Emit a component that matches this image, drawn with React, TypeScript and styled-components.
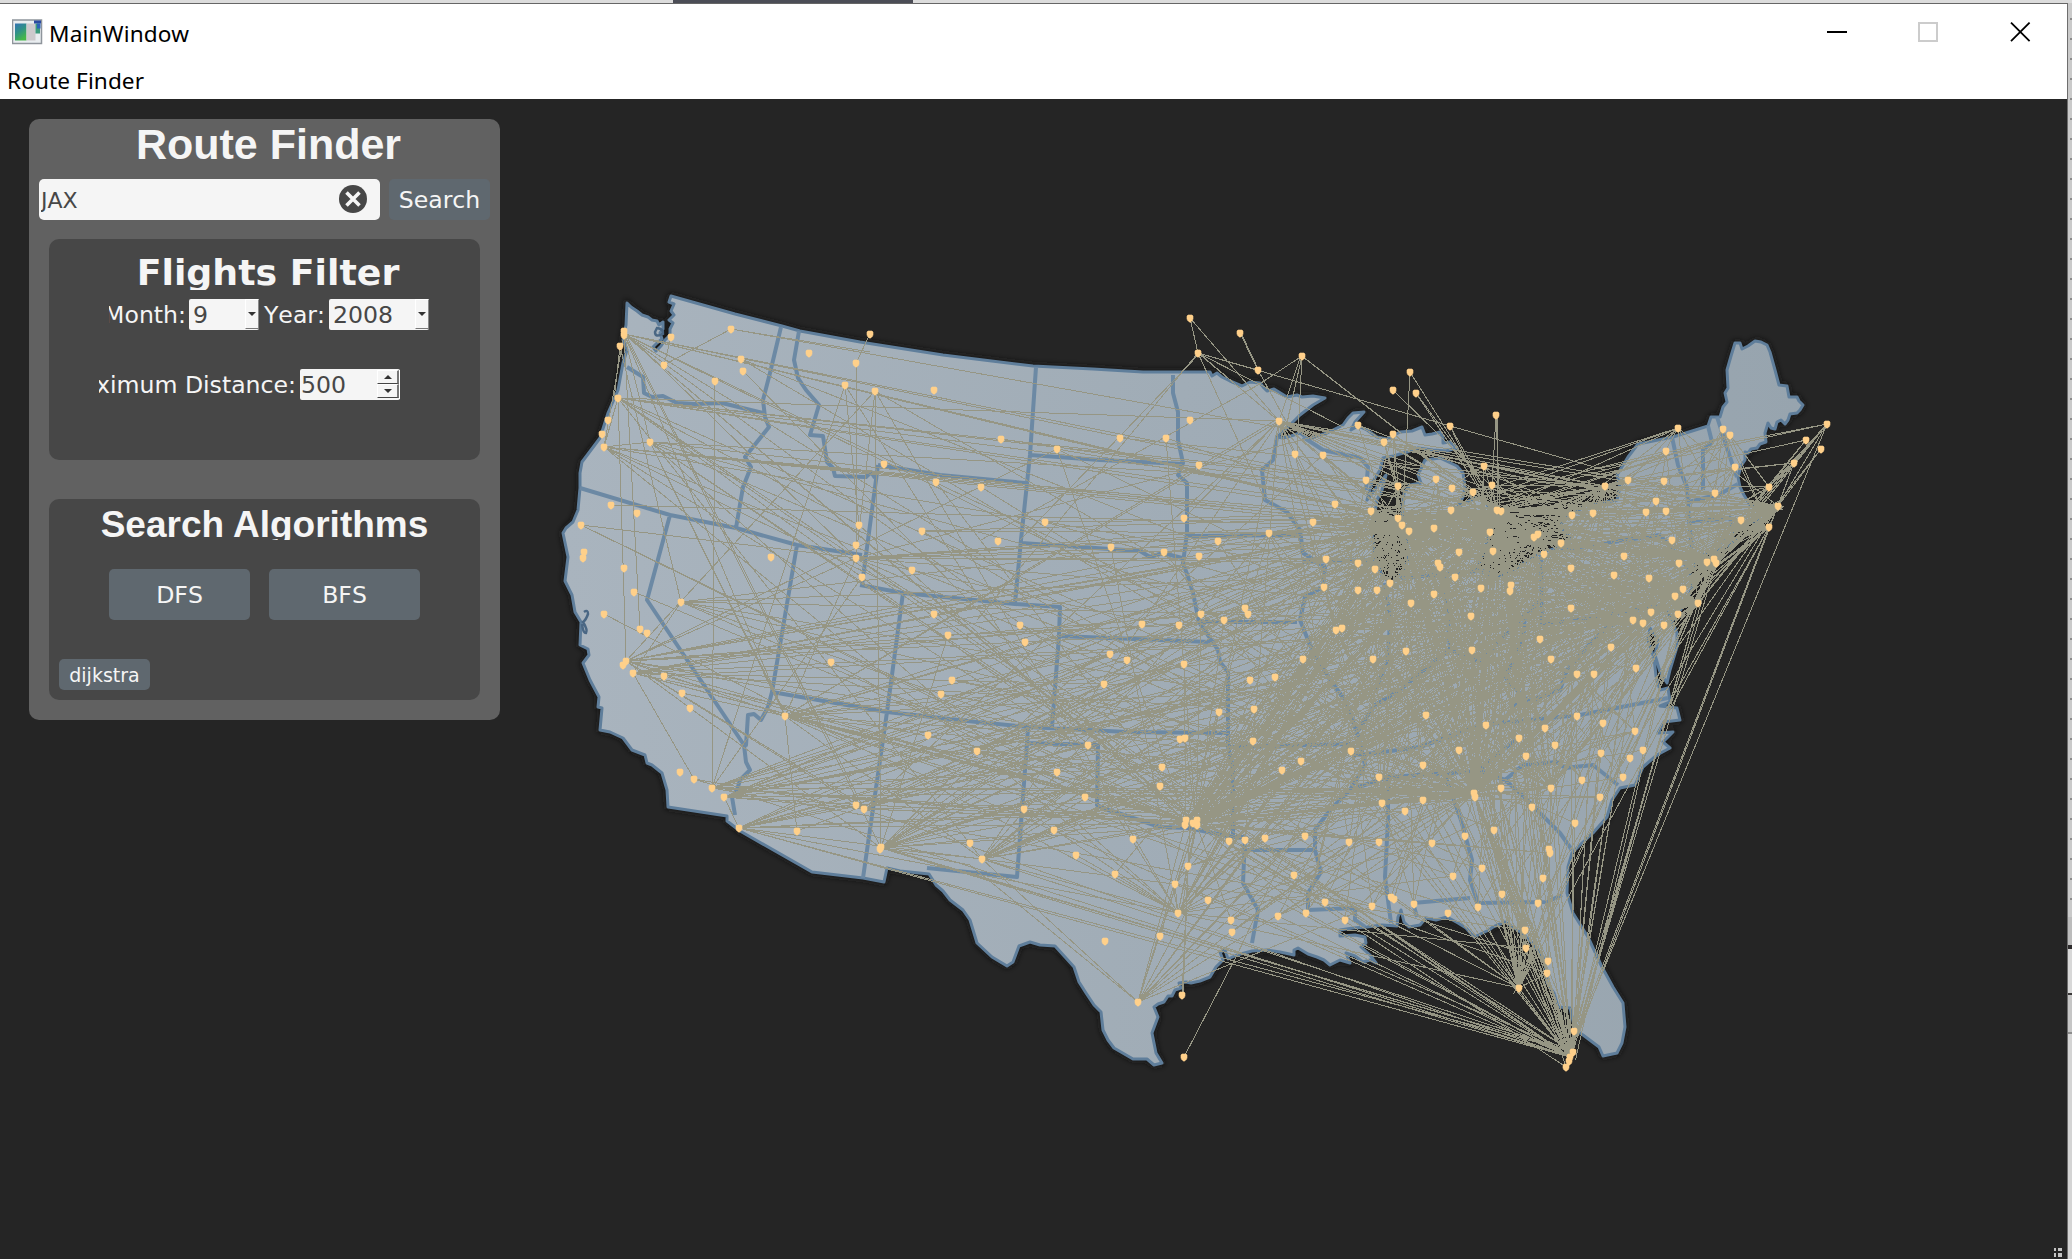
import React from "react";
import styled, { createGlobalStyle } from "styled-components";

const GlobalStyle = createGlobalStyle`
  html, body { margin: 0; padding: 0; background: #d0d0d0; overflow: hidden; }
  * { box-sizing: border-box; }
  button, input { font: inherit; border: 0; margin: 0; padding: 0; }
`;

const uiFont = `"DejaVu Sans", Verdana, sans-serif`;
const headFont = `"Liberation Sans", Arial, sans-serif`;
const winFont = `"Noto Sans", "Open Sans", sans-serif`;

/* ---------- window chrome ---------- */

const Screen = styled.div`
  width: 2072px;
  height: 1259px;
  display: flex;
  flex-direction: column;
  background: #d0d0d0;
`;
const TopStrip = styled.div`
  height: 3px;
  flex: none;
  padding-left: 673px;
  background: #dcdcdc;
`;
const TopStripTab = styled.div`
  width: 240px;
  height: 3px;
  background: #4b4d56;
`;
const Row = styled.div`
  flex: 1;
  display: flex;
  min-height: 0;
`;
const Window = styled.main`
  width: 2068px;
  display: flex;
  flex-direction: column;
  border-top: 1px solid #666;
  border-right: 1px solid #6e6e6e;
  background: #252525;
`;
const EdgeStrip = styled.div`
  width: 4px;
  display: flex;
  flex-direction: column;
`;
const EdgeTicks = styled.div`
  height: 914px;
  background: repeating-linear-gradient(to bottom, transparent 0 15px, #8a8a8a 15px 17px, transparent 17px 20px) 2px 0 / 2px 100% no-repeat, #cacaca;
`;
const EdgePart = styled.div<{ $h: number; $c: string }>`
  height: ${(p) => p.$h}px;
  background: ${(p) => p.$c};
`;
const TitleBar = styled.header`
  height: 56px;
  flex: none;
  display: flex;
  align-items: flex-start;
  background: #fff;
  padding: 15px 36px 0 12px;
`;
const WinTitle = styled.span`
  font: 22.6px/30px ${winFont};
  letter-spacing: 0.15px;
  color: #000;
  margin-left: 6px;
`;
const Controls = styled.div`
  margin-left: auto;
  display: flex;
  gap: 71px;
  padding-top: 3px;
`;
const MenuBar = styled.nav`
  height: 39px;
  flex: none;
  background: #fff;
  padding: 6px 7px 0;
`;
const MenuItem = styled.span`
  display: block;
  font: 22.6px/30px ${winFont};
  letter-spacing: 0.1px;
  color: #000;
`;
const Body = styled.div`
  flex: 1;
  display: flex;
  align-items: flex-start;
  padding: 20px 5px 0 29px;
  background: #252525;
`;
const MapArea = styled.div`
  flex: 1;
  align-self: stretch;
  display: flex;
  flex-direction: column;
  padding: 161px 0 2px 40px;
`;
const Grip = styled.svg`
  margin: auto 0 0 auto;
  display: block;
`;

/* ---------- side panel ---------- */

const Panel = styled.aside`
  width: 471px;
  height: 601px;
  flex: none;
  padding: 0 10px 20px;
  border-radius: 10px;
  background: #616161;
  font-family: ${uiFont};
  font-kerning: none;
  color: #f5f5f5;
`;
const PanelTitle = styled.h1`
  margin: 0;
  padding-left: 8px;
  height: 60px;
  font: bold 43px/51px ${headFont};
  text-align: center;
`;
const SearchRow = styled.form`
  display: flex;
  gap: 9px;
  margin-bottom: 19px;
`;
const Field = styled.label`
  width: 341px;
  height: 41px;
  display: flex;
  align-items: center;
  padding: 0 13px 1px 2px;
  border-radius: 5px;
  background: #f5f5f5;
`;
const FieldInput = styled.input`
  flex: 1;
  min-width: 0;
  height: 40px;
  padding-top: 2px;
  background: transparent;
  outline: none;
  font-size: 22px;
  color: #474747;
`;
const Btn = styled.button<{ $w: number; $h: number; $size?: number }>`
  width: ${(p) => p.$w}px;
  height: ${(p) => p.$h}px;
  border-radius: 5px;
  background: #5f686f;
  color: #f5f5f5;
  font-family: ${uiFont};
  font-size: ${(p) => p.$size ?? 23.6}px;
  font-kerning: none;
  white-space: nowrap;
`;
const Card = styled.section<{ $h: number }>`
  height: ${(p) => p.$h}px;
  margin: 0 10px;
  border-radius: 10px;
  background: #474747;
  overflow: hidden;
`;
const FilterTitle = styled.h2`
  margin: 11px 0 9px;
  padding-left: 7px;
  height: 40px;
  overflow: hidden;
  font: bold 36.3px/46px ${uiFont};
  text-align: center;
`;
const AlgoTitle = styled.h2`
  margin: 10px 0 29px;
  height: 31px;
  overflow: hidden;
  font: bold 37px/32px ${headFont};
  text-align: center;
`;
const FilterRow = styled.div<{ $left: number; $bottom?: number }>`
  display: flex;
  height: 31px;
  margin-bottom: ${(p) => p.$bottom ?? 0}px;
  padding-left: ${(p) => p.$left}px;
`;
const Label = styled.div<{ $w: number; $end: number }>`
  width: ${(p) => p.$w}px;
  padding-right: ${(p) => p.$end}px;
  display: flex;
  justify-content: flex-end;
  overflow: hidden;
  white-space: nowrap;
  font-size: 23.6px;
  line-height: 33px;
`;
const Box = styled.div<{ $w: number; $pad: number }>`
  width: ${(p) => p.$w}px;
  height: 31px;
  display: flex;
  justify-content: space-between;
  padding-left: ${(p) => p.$pad}px;
  border-radius: 2px;
  background: #f5f5f5;
  color: #474747;
  font-size: 23.6px;
  line-height: 33px;
`;
const DropButton = styled.span`
  width: 14px;
  height: 30px;
  display: grid;
  place-items: center;
  border: 1px solid #fff;
  border-right: 1px solid #8a8a8a;
  border-bottom: 1px solid #777;
  background: #f5f5f5;
`;
const Arrow = styled.i<{ $up?: boolean }>`
  width: 0;
  height: 0;
  border: 4px solid transparent;
  border-${(p) => (p.$up ? "bottom" : "top")}-color: #333;
  border-${(p) => (p.$up ? "top" : "bottom")}-width: 0;
`;
const Spin = styled.span`
  width: 23px;
  height: 29px;
  margin: 1px 0 0;
  display: grid;
  grid-template-rows: 14px 14px;
  border-right: 1px solid #fff;
`;
const SpinHalf = styled.span`
  display: grid;
  place-items: center;
  border: 1px solid #fff;
  border-right: 2px solid #777;
  border-bottom: 1px solid #444;
`;
const ButtonRow = styled.div`
  display: flex;
  gap: 19px;
  padding-left: 60px;
  margin-bottom: 39px;
`;
const SmallRow = styled.div`
  padding-left: 10px;
`;
const Spacer = styled.div`
  height: 39px;
`;

/* ---------- map data ---------- */

type P = [number, number];

const parse = (s: string): P[] =>
  s.trim().split(/\s+/).map((t) => t.split(",").map(Number) as P);

const LAND =
  "M627,303 L631,307 637,311 642,315 648,317 652,320 657,321 659,325 663,322 663,329 660,333 662,339 657,343 653,347 656,351 661,346 665,340 670,335 670,329 673,323 669,320 674,315 671,311 674,304 669,302 671,296 735,314 782,326 800,331 860,342 943,355 1033,366 1093,369 1143,372 1210,372 1212,376 1217,373 1222,377 1230,381 1242,386 1250,382 1260,383 1264,388 1267,391 1274,389 1287,397 1297,395 1302,397 1313,396 1325,398 1313,405 1300,415 1288,427 1277,437 1283,438 1291,436 1300,433 1308,439 1327,433 1343,425 1348,418 1353,413 1364,412 1355,422 1351,430 1358,426 1367,430 1377,437 1387,439 1400,432 1412,431 1422,427 1425,435 1432,434 1440,432 1443,438 1443,443 1450,442 1457,448 1446,451 1433,450 1418,448 1407,452 1393,456 1383,458 1380,470 1372,483 1367,500 1377,487 1386,475 1382,490 1377,500 1375,513 1372,533 1375,557 1383,578 1392,582 1402,573 1408,560 1407,540 1402,513 1404,493 1410,485 1421,483 1418,475 1425,460 1440,458 1457,466 1463,473 1465,487 1463,497 1458,507 1470,500 1483,497 1492,513 1488,540 1477,570 1497,577 1513,570 1540,553 1560,547 1570,538 1560,526 1567,517 1587,505 1617,500 1620,487 1617,475 1628,457 1638,444 1673,437 1708,426 1711,417 1720,417 1723,407 1727,402 1725,393 1728,388 1727,370 1731,356 1735,343 1740,343 1742,349 1748,346 1755,341 1761,342 1767,345 1770,352 1775,370 1779,385 1787,386 1789,397 1797,397 1799,401 1803,405 1800,410 1797,413 1790,414 1788,420 1785,424 1781,420 1777,422 1775,429 1771,428 1768,423 1765,433 1766,442 1760,444 1757,448 1751,449 1748,453 1745,452 1745,460 1741,466 1738,477 1740,487 1744,495 1750,505 1765,512 1770,508 1764,520 1748,522 1733,530 1733,538 1722,542 1738,540 1720,550 1700,556 1690,573 1692,588 1687,600 1678,614 1673,620 1668,612 1677,633 1677,647 1670,670 1667,683 1660,672 1655,655 1658,640 1650,628 1648,640 1654,658 1656,676 1660,690 1668,688 1670,702 1660,706 1677,708 1680,720 1664,722 1658,733 1673,732 1663,742 1670,748 1657,755 1643,767 1635,785 1620,788 1612,800 1607,817 1593,833 1582,843 1572,853 1568,867 1567,893 1573,913 1588,937 1602,967 1613,987 1623,1003 1625,1027 1622,1043 1617,1053 1603,1056 1599,1047 1583,1035 1575,1030 1570,1008 1558,1007 1554,993 1547,983 1546,970 1543,957 1532,943 1522,933 1505,922 1493,927 1489,930 1474,937 1466,928 1458,923 1447,917 1436,920 1426,918 1420,925 1409,927 1404,922 1401,910 1398,917 1397,926 1382,925 1367,927 1353,928 1340,930 1340,936 1355,935 1365,937 1366,943 1361,947 1370,955 1376,963 1370,960 1363,962 1355,956 1346,953 1350,963 1340,960 1330,965 1324,960 1317,957 1308,954 1298,948 1294,950 1294,955 1280,952 1267,950 1252,951 1237,955 1228,959 1225,950 1220,952 1223,960 1216,967 1210,977 1200,981 1191,983 1186,982 1179,983 1181,988 1175,990 1172,996 1168,996 1164,1002 1158,1004 1154,1007 1158,1017 1152,1033 1156,1053 1162,1063 1154,1065 1147,1059 1133,1059 1114,1048 1108,1040 1103,1030 1101,1012 1094,1005 1086,993 1079,982 1074,967 1065,957 1055,946 1040,945 1030,942 1019,946 1013,962 1007,966 992,957 977,943 970,920 963,910 950,900 943,891 936,885 929,874 900,871 887,868 884,882 863,878 812,872 740,831 727,821 727,816 668,807 667,790 662,773 652,765 647,763 645,755 632,750 623,738 610,732 600,730 602,708 598,707 599,697 590,680 583,663 589,655 588,649 580,645 581,622 575,612 572,595 565,581 568,557 563,533 566,528 573,522 578,510 580,488 580,473 582,462 600,438 608,413 618,390 623,363 627,350 623,340 626,325Z";

const BORDERS = [
  "627,367 643,377 644,393 652,397 663,396 677,403 695,404 722,403 763,413",
  "781,327 770,373 763,400 765,417 769,427 745,457 751,467 743,487 736,528",
  "580,488 670,515 736,528 797,545 862,555",
  "799,331 794,360 798,378 806,390 819,405 810,435 823,436 827,462 833,468 835,476 866,477 871,472 875,478",
  "878,465 862,585",
  "878,465 940,475 1025,483",
  "1036,367 1030,455 1021,540 1015,603",
  "1030,455 1100,460 1183,464",
  "1021,543 1140,551 1150,557 1163,553 1182,558",
  "1173,375 1173,393 1178,412 1178,440 1183,463 1178,475 1187,483 1187,533 1183,563 1188,577 1193,593 1199,622 1210,638 1218,650 1220,662 1228,672 1228,747 1233,767 1233,837 1245,837 1243,883 1258,910 1252,943",
  "1187,536 1302,535",
  "860,585 903,593 1015,604 1060,607 1059,636 1210,642",
  "1059,636 1052,727",
  "903,593 887,712 863,878",
  "772,692 887,712 977,722 1028,727 1127,732 1228,733",
  "1028,728 1027,743 1098,745 1097,805 1105,809 1118,813 1160,827 1188,828 1233,837",
  "1027,743 1017,877 927,868",
  "670,515 647,600 744,745",
  "797,545 772,692 768,707 761,720 754,714 748,715 746,745 744,745 746,762 750,770 740,780 737,790 732,797 735,815",
  "1243,850 1315,850",
  "1277,437 1273,460 1262,470 1265,500 1287,512 1300,530 1303,553 1325,567 1323,587 1305,597 1300,620 1310,645 1330,680 1345,700 1358,735 1365,765 1350,790 1330,810 1315,830 1315,850 1321,872 1308,893 1308,910 1355,908 1355,920 1365,927",
  "1303,437 1323,450 1360,458 1368,467 1366,490",
  "1199,622 1297,622",
  "1302,562 1375,560",
  "1385,583 1390,620 1388,660 1375,690",
  "1400,578 1490,570",
  "1445,577 1450,650",
  "1355,735 1375,705 1400,690 1430,665 1450,650 1480,662 1500,640 1525,615 1541,600",
  "1541,553 1542,625 1600,616 1665,605",
  "1560,550 1660,535 1690,570",
  "1228,747 1352,744 1354,755 1362,755",
  "1361,755 1420,747 1480,725 1580,715 1668,698",
  "1350,790 1388,777 1480,771 1505,780 1520,793 1560,833 1572,850",
  "1505,780 1523,765 1557,762 1565,768 1593,765 1618,785",
  "1388,777 1388,820 1385,877 1391,923",
  "1445,775 1461,820 1472,860 1470,880 1478,903 1547,902 1562,895",
  "1417,917 1413,903 1470,898",
  "1520,737 1500,752 1480,770",
  "1525,615 1523,640 1505,677 1523,697 1500,723",
  "1523,697 1530,701 1560,690 1567,670 1587,647 1607,627 1625,620",
  "1672,437 1678,465 1687,487 1689,520 1692,548",
  "1708,426 1712,442 1703,450 1703,490",
  "1717,417 1732,463 1737,477",
  "1689,502 1720,494 1738,484",
  "1689,522 1730,518 1733,530",
];

const LAKES = [
  "M584,612 q4,-3 4,2 q-2,6 -5,8 q5,8 3,11 q-3,0 -4,-9",
  "M657,328 q7,1 6,6 q-8,4 -8,-2 z",
];

/* airports scattered over the mainland */
const AIRPORTS = parse(`
624,331 624,335 620,346 671,337 731,329 664,365 741,359 743,371 715,381 809,353 856,363 845,385 618,398 608,420 602,434 604,447 650,442
611,505 637,513 581,525 584,552 583,558 624,568 771,557 859,525 856,545 856,558 862,577 634,592 604,614 640,629 647,633
626,661 623,665 633,673 664,676 682,693 690,708 681,602 831,662 785,716 680,772 694,779 712,788 724,797 739,828 797,831 856,805 864,809
880,849 881,847 912,570 934,614 928,735 875,391 934,390 1001,439 1057,449 1120,438 1166,438 1190,420 1199,465 884,464 936,482 981,487
1045,522 922,531 998,541 1111,547 1164,552 1184,518 1218,541 1199,556 948,635 1020,625 1025,642 952,680 941,694 977,751 1142,624 1179,625
1201,614 1224,620 1245,608 1248,614 1110,654 1127,660 1104,684 1184,664 1250,680 1254,709 1219,712 1253,741 1180,739 1185,738 1088,745
1057,772 1162,767 1160,786 1085,797 1024,809 1054,830 1133,839 970,843 982,859 1076,855 1115,874 1186,820 1185,825 1193,823 1197,820
1197,825 1229,841 1245,840 1188,866 1175,884 1279,421 1358,425 1393,434 1384,442 1295,454 1323,455 1366,480 1398,486 1436,479 1452,488
1473,492 1484,466 1492,485 1335,504 1371,511 1451,510 1497,510 1501,511 1313,522 1269,533 1398,518 1402,525 1409,531 1434,528 1490,532
1493,551 1534,537 1538,534 1326,559 1358,563 1375,569 1459,552 1438,563 1440,567 1455,577 1390,583 1324,587 1358,590 1377,590 1434,594
1481,588 1511,585 1510,591 1678,428 1723,429 1730,435 1666,451 1735,467 1769,487 1778,506 1769,527 1741,520 1605,486 1628,480 1664,481
1715,493 1656,501 1646,512 1666,511 1572,515 1593,513 1561,543 1544,554 1571,568 1624,556 1672,540 1679,563 1614,575 1649,578 1707,562
1714,559 1716,563 1683,589 1675,596 1698,603 1571,608 1651,612 1678,614 1633,620 1643,623 1664,625 1540,639 1551,659 1611,647 1577,674
1594,674 1636,668 1577,716 1603,723 1635,731 1486,725 1519,738 1545,728 1555,745 1526,756 1601,753 1630,758 1643,750 1623,777 1582,780
1501,788 1551,788 1600,797 1532,807 1575,823 1494,830 1549,849 1550,853 1543,878 1538,903 1482,868 1502,894 1525,930 1526,948 1548,961
1547,973 1519,988 1574,1031 1573,1052 1570,1057 1569,1061 1566,1067 1208,900 1178,913 1231,920 1232,932 1265,838 1305,836 1294,875
1349,842 1379,842 1325,902 1278,916 1306,913 1345,920 1372,906 1391,897 1394,899 1414,904 1448,913 1432,843 1465,836 1453,876 1478,907
1105,941 1160,936 1138,1002 1303,659 1275,677 1336,630 1342,628 1373,659 1406,651 1472,650 1411,603 1471,616 1426,715 1351,751 1301,761
1282,770 1379,777 1423,765 1459,750 1474,793 1475,797 1423,800 1405,811 1382,803
`);

/* airports with a handful of explicit connections */
const REMOTE = parse(`
870,334 1190,318 1198,353 1240,333 1258,370 1302,356 1410,372 1393,390 1416,393 1496,415 1450,426 1827,424 1806,440 1821,449 1794,463 1182,995 1184,1057
`);

const FIXED = [
  "870,334 856,363", "856,363 856,558", "845,385 859,525", "1190,318 1198,353", "1190,318 1279,421", "1198,353 1450,426", "1198,353 1279,421",
  "1201,355 1281,423", "1198,353 1343,427", "1198,353 1258,370", "1198,353 1265,500", "1198,353 977,620", "1200,353 1020,540", "1450,426 1605,470",
  "1240,333 1258,370", "1241,333 1259,371", "1258,370 1287,423", "1302,356 1283,440", "1302,356 1297,454", "1300,358 1279,421", "1302,356 1258,385",
  "1302,356 1400,432", "1303,357 1402,434", "1302,356 1287,423", "1258,385 981,540", "1410,372 1402,525", "1410,372 1497,510", "1393,390 1490,485",
  "1416,393 1493,510", "1416,393 1480,480", "1496,415 1492,485", "1496,415 1500,511", "1497,415 1498,511", "1450,426 1497,510", "1450,426 1485,500",
  "1182,995 1188,866", "1183,995 1190,823", "1184,1057 1237,955", "1237,955 1310,800", "1138,1002 970,865", "970,865 881,848",
  "1519,988 1526,948", "1393,434 1397,518", "1394,436 1401,525", "1384,442 1398,486", "1678,428 1715,493", "1730,435 1769,487", "1723,429 1715,493",
  "624,334 604,447", "620,346 614,400", "731,329 664,365", "731,329 870,352", "671,337 664,365", "650,442 604,447",
  "1827,424 1590,470", "1827,424 1592,476", "1806,440 1600,486", "1794,463 1610,484", "1794,463 1628,480",
  "1827,424 1769,487", "1827,424 1778,506", "1806,440 1769,487", "1821,449 1778,506", "1794,463 1778,506", "1794,463 1769,487",
  "1827,424 1714,560", "1827,424 1716,563", "1794,463 1714,560", "1821,449 1698,603", "1827,424 1683,589", "1827,424 1643,623",
  "1827,424 1570,1052", "1769,527 1570,1052", "1794,463 1570,1057", "1806,440 1683,589",
];

/* hub: x, y, connection weight, reach */
const HUBS: [number, number, number, number][] = [
  [624, 334, 0.12, 500], [618, 398, 0.1, 500], [604, 447, 0.08, 450], [650, 442, 0.06, 400],
  [681, 602, 0.12, 500], [626, 661, 0.16, 600], [633, 673, 0.14, 600], [785, 716, 0.22, 600],
  [712, 788, 0.18, 600], [724, 797, 0.12, 600], [739, 828, 0.13, 600], [881, 848, 0.28, 600],
  [856, 558, 0.18, 500], [864, 809, 0.12, 500], [977, 751, 0.12, 400], [982, 859, 0.18, 500], [1279, 421, 0.26, 480],
  [1186, 822, 0.4, 600], [1196, 823, 0.9, 620], [1178, 913, 0.45, 500], [1138, 1002, 0.08, 400],
  [1398, 518, 0.8, 560], [1402, 527, 0.7, 560], [1497, 510, 0.85, 480], [1501, 511, 0.6, 460],
  [1336, 630, 0.25, 450], [1382, 803, 0.3, 450], [1474, 793, 1.2, 620], [1472, 650, 0.45, 480],
  [1538, 534, 0.7, 420], [1551, 788, 0.35, 450], [1577, 674, 0.15, 400], [1643, 623, 0.5, 400], [1683, 589, 0.5, 400],
  [1714, 560, 0.75, 460], [1698, 603, 0.3, 400], [1778, 506, 0.62, 460], [1769, 527, 0.2, 480],
  [1605, 486, 0.25, 350], [1519, 988, 0.3, 600], [1570, 1057, 0.4, 650], [1573, 1052, 0.2, 600],
];

function buildRoutes(): string {
  let seed = 20080901;
  const rnd = () => {
    seed = (Math.imul(seed, 1664525) + 1013904223) >>> 0;
    return seed / 4294967296;
  };
  const out: string[] = [];
  const line = (a: number, b: number, c: number, d: number) => {
    const gulf = (a < 1170 && b > 860 && d > 930) || (c < 1170 && d > 860 && b > 930);
    if (gulf && Math.abs(a - c) > 150) return;
    out.push(`M${a.toFixed(1)},${b.toFixed(1)}L${c.toFixed(1)},${d.toFixed(1)}`);
  };

  HUBS.forEach(([hx, hy, w, reach], i) => {
    AIRPORTS.forEach(([x, y]) => {
      const d = Math.hypot(x - hx, y - hy);
      if (d < 12) return;
      const side = x > 1250 ? (y < 620 ? 0.75 : 0.4) : x > 1000 ? 0.28 : 0.22;
      if (rnd() < w * side * Math.exp(-d / reach)) line(hx, hy, x, y);
    });
    HUBS.slice(i + 1).forEach(([x, y, v]) => {
      const d = Math.hypot(x - hx, y - hy);
      if (d < 14 || rnd() > 0.1 + (w + v) * 0.32) return;
      line(hx, hy, x, y);
      if (rnd() < 0.1 + w * v * 0.8) {
        const j = () => (rnd() - 0.5) * 14;
        line(hx, hy, x + j(), y + j());
      }
    });
  });
  FIXED.forEach((s) => {
    const [a, b] = parse(s);
    out.push(`M${a}L${b}`);
  });
  return out.join("");
}

const ROUTES = buildRoutes();
const BORDER_PATH = BORDERS.map((b) => "M" + b.replace(" ", " L")).join(" ");

const MapSvg = styled.svg`
  display: block;
  flex: none;
`;

const RouteMap = () => (
  <MapSvg width={1320} height={810} viewBox="540 280 1320 810">
    <defs>
      <linearGradient id="land" x1="0" x2="1" y1="0" y2="0">
        <stop offset="0" stopColor="#a9b4be" />
        <stop offset="1" stopColor="#97a4ae" />
      </linearGradient>
      <filter id="shade" x="-5%" y="-5%" width="110%" height="110%">
        <feGaussianBlur stdDeviation="3" />
      </filter>
    </defs>
    <path d={LAND} fill="#111" stroke="#151515" strokeWidth={4} filter="url(#shade)" />
    <path d={LAND} fill="url(#land)" stroke="#5f7e9b" strokeWidth={3} strokeLinejoin="round" />
    <path d={BORDER_PATH} fill="none" stroke="#6c89a4" strokeWidth={4} strokeLinejoin="round" />
    {LAKES.map((d) => (
      <path key={d} d={d} fill="none" stroke="#4a6784" strokeWidth={2.5} />
    ))}
    <path d={ROUTES} fill="none" stroke="#969684" strokeWidth={1} shapeRendering="crispEdges" />
    <g fill="#ffd08a">
      {[...AIRPORTS, ...REMOTE].map(([x, y], i) => (
        <path key={i} d={`M${x - 2},${y - 3}h4l1,1v3l-1,2h-1v1h-2v-1h-1l-1,-2v-3z`} stroke="#ffd08a" strokeWidth={0.6} />
      ))}
    </g>
  </MapSvg>
);

const AppIcon = () => (
  <svg width="31" height="26" viewBox="0 0 31 26">
    <defs>
      <linearGradient id="ico" x1="0" y1="0" x2="0.5" y2="1">
        <stop offset="0" stopColor="#3473b4" />
        <stop offset="0.5" stopColor="#2f9088" />
        <stop offset="1" stopColor="#45b848" />
      </linearGradient>
    </defs>
    <rect x="0.5" y="1" width="29" height="23.5" fill="#e9edf0" stroke="#8f959c" strokeWidth="1.5" />
    <rect x="3" y="4.5" width="11.5" height="17" fill="url(#ico)" />
    <rect x="14.5" y="4.5" width="9" height="17" fill="#cdc9cc" />
    <rect x="23.5" y="4.5" width="4.5" height="10" fill="#3d9a7c" />
    <rect x="22" y="1.5" width="7" height="3" fill="#2b4aa0" />
    <rect x="25" y="4.5" width="3.5" height="5" fill="#2d62b8" />
  </svg>
);

export default function App() {
  return (
    <Screen>
      <GlobalStyle />
      <TopStrip>
        <TopStripTab />
      </TopStrip>
      <Row>
        <Window>
          <TitleBar>
            <AppIcon />
            <WinTitle>MainWindow</WinTitle>
            <Controls>
              <svg width="20" height="20" viewBox="0 0 20 20">
                <path d="M0,10h20" stroke="#000" strokeWidth="2" />
              </svg>
              <svg width="20" height="20" viewBox="0 0 20 20">
                <rect x="1" y="1" width="18" height="18" fill="none" stroke="#ccc" strokeWidth="2" />
              </svg>
              <svg width="22" height="20" viewBox="-1 0 22 20">
                <path d="M1,0.6L19.6,19.2M19.6,0.6L1,19.2" stroke="#000" strokeWidth="1.8" />
              </svg>
            </Controls>
          </TitleBar>
          <MenuBar>
            <MenuItem>Route Finder</MenuItem>
          </MenuBar>
          <Body>
            <Panel>
              <PanelTitle>Route Finder</PanelTitle>
              <SearchRow onSubmit={(e) => e.preventDefault()}>
                <Field>
                  <FieldInput defaultValue="JAX" />
                  <svg width="28" height="28" viewBox="0 0 28 28">
                    <circle cx="14" cy="14" r="14" fill="#474747" />
                    <path d="M7.5,7.5l13,13M20.5,7.5l-13,13" stroke="#f5f5f5" strokeWidth="3.6" />
                  </svg>
                </Field>
                <Btn $w={101} $h={41}>Search</Btn>
              </SearchRow>
              <Card $h={221}>
                <FilterTitle>Flights Filter</FilterTitle>
                <FilterRow $left={60} $bottom={39}>
                  <Label $w={80} $end={3}>Month:</Label>
                  <Box $w={70} $pad={4}>
                    9
                    <DropButton><Arrow /></DropButton>
                  </Box>
                  <Label $w={70} $end={4}>Year:</Label>
                  <Box $w={100} $pad={4}>
                    2008
                    <DropButton><Arrow /></DropButton>
                  </Box>
                </FilterRow>
                <FilterRow $left={50}>
                  <Label $w={201} $end={4}>Maximum Distance:</Label>
                  <Box $w={100} $pad={1}>
                    500
                    <Spin>
                      <SpinHalf><Arrow $up /></SpinHalf>
                      <SpinHalf><Arrow /></SpinHalf>
                    </Spin>
                  </Box>
                </FilterRow>
              </Card>
              <Spacer />
              <Card $h={201}>
                <AlgoTitle>Search Algorithms</AlgoTitle>
                <ButtonRow>
                  <Btn $w={141} $h={51}>DFS</Btn>
                  <Btn $w={151} $h={51}>BFS</Btn>
                </ButtonRow>
                <SmallRow>
                  <Btn $w={91} $h={31} $size={19}>dijkstra</Btn>
                </SmallRow>
              </Card>
            </Panel>
            <MapArea>
              <RouteMap />
              <Grip width="8" height="9" viewBox="0 0 8 9">
                <path d="M0,0h2v3h-2zM4,0h4v3h-4zM0,5h2v4h-2zM4,5h4v4h-4z" fill="#c4c4c4" />
              </Grip>
            </MapArea>
          </Body>
        </Window>
        <EdgeStrip>
          <EdgeTicks />
          <EdgePart $h={28} $c="#bcbcbc" />
          <EdgePart $h={4} $c="#2e2c2d" />
          <EdgePart $h={44} $c="#d8d8d8" />
          <EdgePart $h={2} $c="#3a3838" />
          <EdgePart $h={37} $c="#c6c6c6" />
          <EdgePart $h={2} $c="#8c8c8c" />
          <EdgePart $h={225} $c="#d4d4d4" />
        </EdgeStrip>
      </Row>
    </Screen>
  );
}
